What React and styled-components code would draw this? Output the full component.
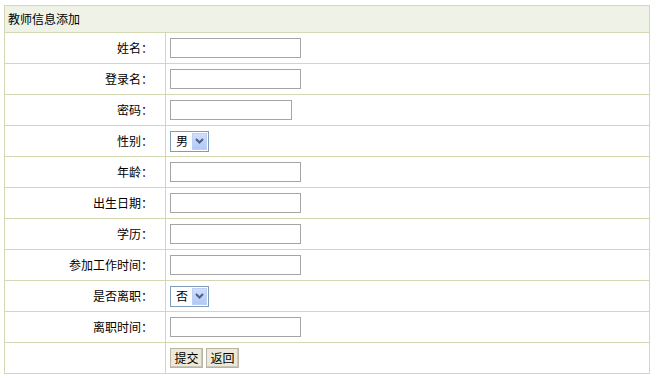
import React from "react";
import styled, { createGlobalStyle } from "styled-components";

const Global = createGlobalStyle`
  html, body { margin: 0; padding: 0; background: #ffffff; }
  body { font-family: "Noto Sans CJK SC", "Liberation Sans", sans-serif; font-size: 12px; color: #000; }
`;

const Page = styled.div`
  padding: 5px 8px 0 4px;
`;

const Form = styled.div`
  width: 644px;
  border: 1px solid #d3d9b3;
  border-bottom: none;
  display: grid;
  grid-template-columns: 161px 1fr;
`;

const Header = styled.div`
  grid-column: 1 / -1;
  height: 26px;
  background: #eef2e7;
  border-bottom: 1px solid #d3d9b3;
  display: flex;
  align-items: center;
  padding-left: 3px;
  line-height: 1;
`;

const Label = styled.div`
  height: 30px;
  border-right: 1px solid #d3d9b3;
  border-bottom: 1px solid #d3d9b3;
  display: flex;
  align-items: center;
  justify-content: flex-end;
  padding-right: 12px;
  line-height: 1;
`;

const Field = styled.div`
  height: 30px;
  border-bottom: 1px solid #d3d9b3;
  display: flex;
  align-items: center;
  padding-left: 4px;
  gap: 3px;
`;

const TextInput = styled.input`
  box-sizing: border-box;
  width: ${(p) => p.$w || 131}px;
  height: 20px;
  border: 1px solid #a5a5a5;
  margin: 0;
  padding: 0 2px;
  background: #fff;
  outline: none;
`;

const Select = styled.div`
  box-sizing: border-box;
  width: 39px;
  height: 21px;
  border: 1px solid #7f9db9;
  background: #fff;
  display: flex;
  align-items: center;
  padding: 1px;
`;

const SelectText = styled.span`
  flex: 1;
  padding-left: 4px;
  line-height: 1;
`;

const Arrow = styled.span`
  width: 15px;
  height: 17px;
  background: linear-gradient(#d0defc, #b3c8f5);
  border: 1px solid #bcd0f7;
  box-sizing: border-box;
  display: flex;
  align-items: center;
  justify-content: center;
`;

const Button = styled.button`
  box-sizing: border-box;
  height: 20px;
  width: 33px;
  padding: 0;
  margin: 0;
  font: inherit;
  font-size: 12px;
  line-height: 1;
  color: #000;
  background: #ece9d8;
  border: 1px solid;
  border-color: #f5f4ec #8d8b7e #8d8b7e #f5f4ec;
  box-shadow: inset -1px -1px 0 #cbc7b8;
  outline: 1px solid #b8b5a6;
  outline-offset: -1px;
`;

const Chevron = () => (
  <svg width="9" height="6" viewBox="0 0 9 6">
    <path d="M1 1 L4.5 4.5 L8 1" fill="none" stroke="#4d6185" strokeWidth="2" />
  </svg>
);

const rows = [
  { label: "姓名：", type: "text" },
  { label: "登录名：", type: "text" },
  { label: "密码：", type: "password" },
  { label: "性别：", type: "select", value: "男" },
  { label: "年龄：", type: "text" },
  { label: "出生日期：", type: "text" },
  { label: "学历：", type: "text" },
  { label: "参加工作时间：", type: "text" },
  { label: "是否离职：", type: "select", value: "否" },
  { label: "离职时间：", type: "text" },
];

export default function App() {
  return (
    <>
      <Global />
      <Page>
        <Form>
          <Header>教师信息添加</Header>
          {rows.map((r) => (
            <React.Fragment key={r.label}>
              <Label>{r.label}</Label>
              <Field>
                {r.type === "select" ? (
                  <Select>
                    <SelectText>{r.value}</SelectText>
                    <Arrow>
                      <Chevron />
                    </Arrow>
                  </Select>
                ) : (
                  <TextInput type={r.type} $w={r.type === "password" ? 122 : 131} />
                )}
              </Field>
            </React.Fragment>
          ))}
          <Label />
          <Field>
            <Button>提交</Button>
            <Button>返回</Button>
          </Field>
        </Form>
      </Page>
    </>
  );
}
